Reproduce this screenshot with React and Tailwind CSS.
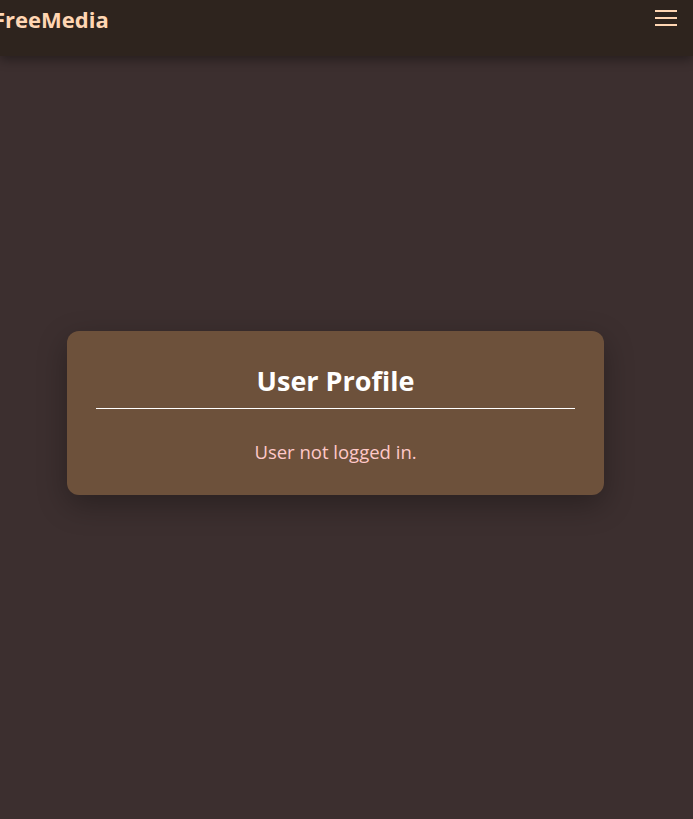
import React from 'react';

const App = () => {
  return (
    <div className="min-h-screen bg-[#3c2f2f] font-['Open_Sans',sans-serif]">
      <header className="h-[56px] bg-[#2e241e] flex items-start justify-between pr-4 shadow-[0_4px_10px_rgba(0,0,0,0.35)] relative">
        <h1 className="-ml-[7px] mt-[4px] text-[22px] leading-[30px] font-bold text-[#ffd6b3]">FreeMedia</h1>
        <button className="mt-[10px] flex flex-col gap-[5px] w-[22px]" aria-label="menu">
          <span className="block h-[2px] w-full bg-[#ffd6b3]" />
          <span className="block h-[2px] w-full bg-[#ffd6b3]" />
          <span className="block h-[2px] w-full bg-[#ffd6b3]" />
        </button>
      </header>

      <main className="pt-[275px]">
        <div className="ml-[67px] w-[537px] h-[164px] rounded-xl bg-[#6d513b] px-[29px] pt-[35px] shadow-[0_10px_30px_rgba(0,0,0,0.3)]">
          <h2 className="text-center text-[27px] font-bold text-white leading-[30px]">User Profile</h2>
          <div className="mt-[12px] h-px bg-white" />
          <p className="mt-[33px] text-center text-[18.5px] text-[#ffc8c8] leading-[20px]">User not logged in.</p>
        </div>
      </main>
    </div>
  );
};

export default App;
